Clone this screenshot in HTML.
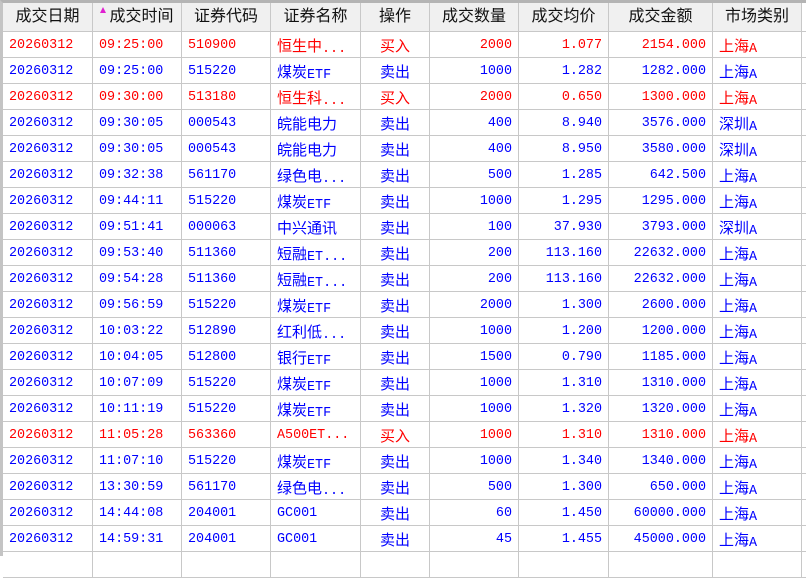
<!DOCTYPE html>
<html><head><meta charset="utf-8"><style>
body{margin:0;width:806px;height:556px;background:#fff;overflow:hidden;position:relative;font-family:"Liberation Mono","Noto Sans CJK SC",monospace;}
.frame{position:absolute;left:0;top:0;width:806px;height:556px;border-top:3px solid #b4b4b4;border-left:3px solid #c4c4c4;box-sizing:border-box;}
.grid{position:absolute;left:3px;top:3px;width:803px;}
.row{display:flex;height:26px;}
.row>div{box-sizing:border-box;border-right:1px solid #c8c8c8;border-bottom:1px solid #c8c8c8;padding:0 6px;white-space:nowrap;overflow:hidden;font-size:13.4px;line-height:28px;flex:none;}
.hd{height:29px;}
.hd>div{background:#f0f0f0;color:#111;font-family:"Liberation Sans","WenQuanYi Zen Hei",sans-serif;font-size:16px;line-height:28px;text-align:center;}
.row>div:nth-child(1){width:90px}.row>div:nth-child(2){width:89px}.row>div:nth-child(3){width:89px}.row>div:nth-child(4){width:90px}.row>div:nth-child(5){width:69px;text-align:center}.row>div:nth-child(6){width:89px;text-align:right}.row>div:nth-child(7){width:90px;text-align:right}.row>div:nth-child(8){width:104px;text-align:right}.row>div:nth-child(9){width:89px}.row>div:nth-child(10){width:32px;border-right:none}
.hd>div:nth-child(n){text-align:center}
.hd>div:nth-child(10){background:#fff}
.c{font-size:15px;font-family:"WenQuanYi Zen Hei","Noto Sans CJK SC",sans-serif;vertical-align:1px;}
.r>div{color:#f00;} .b>div{color:#00f;}
.tri{display:inline-block;width:0;height:0;border-left:3px solid transparent;border-right:3px solid transparent;border-bottom:6px solid #e020d0;vertical-align:8px;margin-right:3px;}
</style></head><body>
<div class="frame"></div>
<div class="grid">
<div class="row hd"><div>成交日期</div><div><span class="tri"></span>成交时间</div><div>证券代码</div><div>证券名称</div><div>操作</div><div>成交数量</div><div>成交均价</div><div>成交金额</div><div>市场类别</div><div></div></div>
<div class="row r"><div>20260312</div><div>09:25:00</div><div>510900</div><div><span class="c">恒生中</span>...</div><div><span class="c">买入</span></div><div>2000</div><div>1.077</div><div>2154.000</div><div><span class="c">上海</span>A</div><div></div></div>
<div class="row b"><div>20260312</div><div>09:25:00</div><div>515220</div><div><span class="c">煤炭</span>ETF</div><div><span class="c">卖出</span></div><div>1000</div><div>1.282</div><div>1282.000</div><div><span class="c">上海</span>A</div><div></div></div>
<div class="row r"><div>20260312</div><div>09:30:00</div><div>513180</div><div><span class="c">恒生科</span>...</div><div><span class="c">买入</span></div><div>2000</div><div>0.650</div><div>1300.000</div><div><span class="c">上海</span>A</div><div></div></div>
<div class="row b"><div>20260312</div><div>09:30:05</div><div>000543</div><div><span class="c">皖能电力</span></div><div><span class="c">卖出</span></div><div>400</div><div>8.940</div><div>3576.000</div><div><span class="c">深圳</span>A</div><div></div></div>
<div class="row b"><div>20260312</div><div>09:30:05</div><div>000543</div><div><span class="c">皖能电力</span></div><div><span class="c">卖出</span></div><div>400</div><div>8.950</div><div>3580.000</div><div><span class="c">深圳</span>A</div><div></div></div>
<div class="row b"><div>20260312</div><div>09:32:38</div><div>561170</div><div><span class="c">绿色电</span>...</div><div><span class="c">卖出</span></div><div>500</div><div>1.285</div><div>642.500</div><div><span class="c">上海</span>A</div><div></div></div>
<div class="row b"><div>20260312</div><div>09:44:11</div><div>515220</div><div><span class="c">煤炭</span>ETF</div><div><span class="c">卖出</span></div><div>1000</div><div>1.295</div><div>1295.000</div><div><span class="c">上海</span>A</div><div></div></div>
<div class="row b"><div>20260312</div><div>09:51:41</div><div>000063</div><div><span class="c">中兴通讯</span></div><div><span class="c">卖出</span></div><div>100</div><div>37.930</div><div>3793.000</div><div><span class="c">深圳</span>A</div><div></div></div>
<div class="row b"><div>20260312</div><div>09:53:40</div><div>511360</div><div><span class="c">短融</span>ET...</div><div><span class="c">卖出</span></div><div>200</div><div>113.160</div><div>22632.000</div><div><span class="c">上海</span>A</div><div></div></div>
<div class="row b"><div>20260312</div><div>09:54:28</div><div>511360</div><div><span class="c">短融</span>ET...</div><div><span class="c">卖出</span></div><div>200</div><div>113.160</div><div>22632.000</div><div><span class="c">上海</span>A</div><div></div></div>
<div class="row b"><div>20260312</div><div>09:56:59</div><div>515220</div><div><span class="c">煤炭</span>ETF</div><div><span class="c">卖出</span></div><div>2000</div><div>1.300</div><div>2600.000</div><div><span class="c">上海</span>A</div><div></div></div>
<div class="row b"><div>20260312</div><div>10:03:22</div><div>512890</div><div><span class="c">红利低</span>...</div><div><span class="c">卖出</span></div><div>1000</div><div>1.200</div><div>1200.000</div><div><span class="c">上海</span>A</div><div></div></div>
<div class="row b"><div>20260312</div><div>10:04:05</div><div>512800</div><div><span class="c">银行</span>ETF</div><div><span class="c">卖出</span></div><div>1500</div><div>0.790</div><div>1185.000</div><div><span class="c">上海</span>A</div><div></div></div>
<div class="row b"><div>20260312</div><div>10:07:09</div><div>515220</div><div><span class="c">煤炭</span>ETF</div><div><span class="c">卖出</span></div><div>1000</div><div>1.310</div><div>1310.000</div><div><span class="c">上海</span>A</div><div></div></div>
<div class="row b"><div>20260312</div><div>10:11:19</div><div>515220</div><div><span class="c">煤炭</span>ETF</div><div><span class="c">卖出</span></div><div>1000</div><div>1.320</div><div>1320.000</div><div><span class="c">上海</span>A</div><div></div></div>
<div class="row r"><div>20260312</div><div>11:05:28</div><div>563360</div><div>A500ET...</div><div><span class="c">买入</span></div><div>1000</div><div>1.310</div><div>1310.000</div><div><span class="c">上海</span>A</div><div></div></div>
<div class="row b"><div>20260312</div><div>11:07:10</div><div>515220</div><div><span class="c">煤炭</span>ETF</div><div><span class="c">卖出</span></div><div>1000</div><div>1.340</div><div>1340.000</div><div><span class="c">上海</span>A</div><div></div></div>
<div class="row b"><div>20260312</div><div>13:30:59</div><div>561170</div><div><span class="c">绿色电</span>...</div><div><span class="c">卖出</span></div><div>500</div><div>1.300</div><div>650.000</div><div><span class="c">上海</span>A</div><div></div></div>
<div class="row b"><div>20260312</div><div>14:44:08</div><div>204001</div><div>GC001</div><div><span class="c">卖出</span></div><div>60</div><div>1.450</div><div>60000.000</div><div><span class="c">上海</span>A</div><div></div></div>
<div class="row b"><div>20260312</div><div>14:59:31</div><div>204001</div><div>GC001</div><div><span class="c">卖出</span></div><div>45</div><div>1.455</div><div>45000.000</div><div><span class="c">上海</span>A</div><div></div></div>
<div class="row b"><div></div><div></div><div></div><div></div><div></div><div></div><div></div><div></div><div></div><div></div></div>
</div>
</body></html>
